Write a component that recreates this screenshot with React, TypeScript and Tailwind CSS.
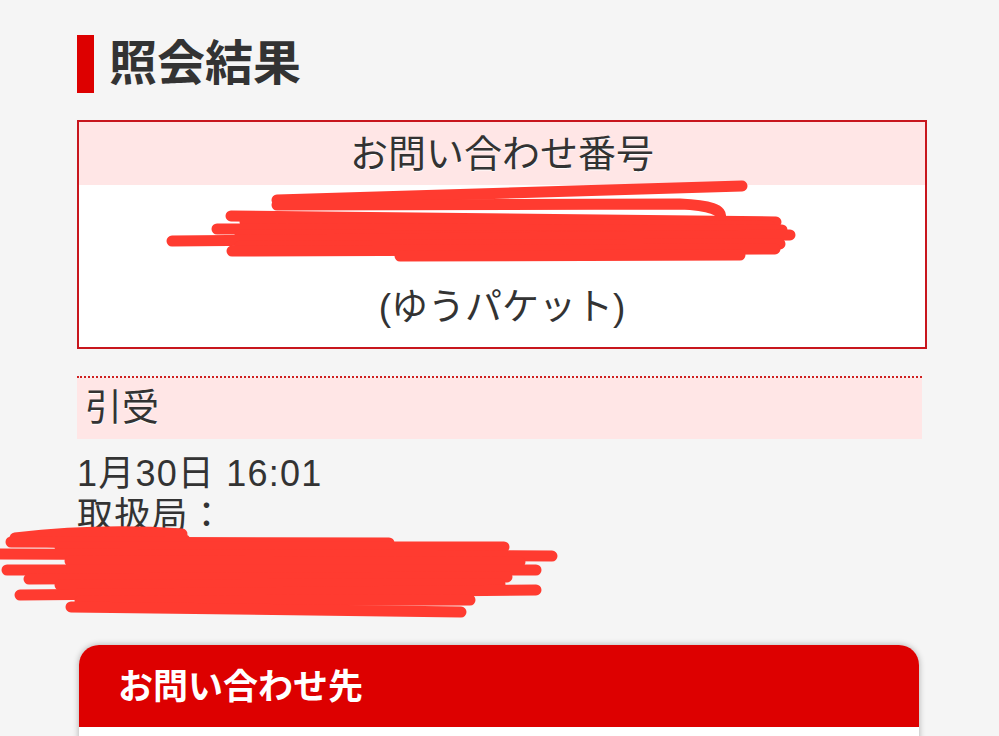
import React from "react";

const s1: string[] = [
  "M277 200 L742 186",
  "M277 205 L680 204 Q725 206 720 218",
  "M231 216 L776 222",
  "M245 222 L770 226",
  "M217 229 L782 230",
  "M240 235 L760 237",
  "M172 241 L790 235",
  "M240 246 L780 244",
  "M232 251 L775 249",
  "M400 256 L740 255",
];

const s2: string[] = [
  "M182 534 Q100 528 15 538 Q60 546 185 540",
  "M11 542 L389 543",
  "M60 547 L504 547",
  "M0 554 L552 556",
  "M70 561 L520 562",
  "M7 570 L536 570",
  "M29 579 L507 577",
  "M60 585 L500 584",
  "M20 595 L536 590",
  "M80 601 L470 600",
  "M71 607 L461 612",
];

export default function App() {
  return (
    <div
      className="relative w-[999px] h-[736px] overflow-hidden bg-[#f5f5f5] text-[#333]"
      style={{ fontFamily: '"Liberation Sans", "Noto Sans CJK JP", sans-serif' }}
    >
      <div className="pl-[77px] pr-[72px] pt-[35px]">
        {/* Heading */}
        <div className="flex items-center h-[58px]">
          <div className="w-[17px] h-[58px] bg-[#dd0000]" />
          <h1 className="ml-[15px] text-[48px] font-bold leading-none text-[#333]">照会結果</h1>
        </div>

        {/* Tracking box */}
        <div className="mt-[27px] border-2 border-[#c8161d]">
          <div className="h-[63px] bg-[#ffe6e6] flex items-center justify-center text-[38px] leading-none [text-shadow:0_1px_1px_#fff]">
            お問い合わせ番号
          </div>
          <div className="h-[162px] bg-white flex flex-col items-center">
            <div className="h-[40px] mt-[28px]" />
            <div className="mt-[33px] text-[37px] leading-[44px]">(ゆうパケット)</div>
          </div>
        </div>

        {/* Status section */}
        <div className="mt-[27px] mr-[5px] border-t-2 border-dotted border-[#d02020]">
          <div className="h-[61px] bg-[#ffe6e6] pl-[8px] flex items-center text-[37px] leading-none [text-shadow:0_1px_1px_#fff]">
            引受
          </div>
        </div>
        <div className="mt-[14px] text-[36px] leading-[42px] tracking-[1.2px]">
          <div>1月30日 16:01</div>
          <div>取扱局：</div>
        </div>

        {/* Contact card */}
        <div className="mt-[108px] ml-[2px] mr-[8px] rounded-t-[20px] overflow-hidden shadow-[0_0_6px_rgba(0,0,0,0.3)]">
          <div className="h-[82px] bg-[#dd0000] pl-[39px] flex items-center text-white font-bold text-[35px] leading-none">
            お問い合わせ先
          </div>
          <div className="h-[40px] bg-white" />
        </div>
      </div>

      {/* Redaction scribbles */}
      <svg
        className="absolute left-0 top-0 pointer-events-none"
        width="999"
        height="736"
        viewBox="0 0 999 736"
      >
        <g fill="none" stroke="#ff3b30" strokeWidth="11" strokeLinecap="round" strokeLinejoin="round">
          {s1.map((d, i) => (
            <path key={"a" + i} d={d} />
          ))}
          {s2.map((d, i) => (
            <path key={"b" + i} d={d} />
          ))}
        </g>
      </svg>
    </div>
  );
}
